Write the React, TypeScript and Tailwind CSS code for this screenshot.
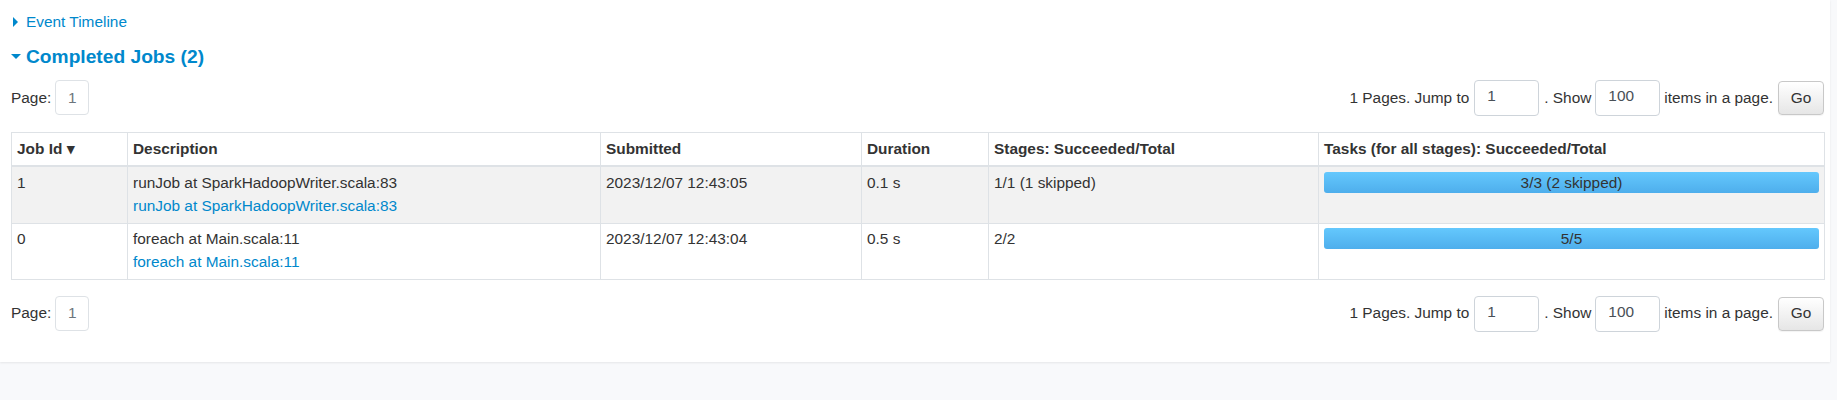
import React from 'react';

const jobs = [
  {
    id: '1',
    name: 'runJob at SparkHadoopWriter.scala:83',
    submitted: '2023/12/07 12:43:05',
    duration: '0.1 s',
    stages: '1/1 (1 skipped)',
    tasks: '3/3 (2 skipped)',
  },
  {
    id: '0',
    name: 'foreach at Main.scala:11',
    submitted: '2023/12/07 12:43:04',
    duration: '0.5 s',
    stages: '2/2',
    tasks: '5/5',
  },
];

const columns = [
  { label: 'Job Id \u25BE', width: 'w-[116px]' },
  { label: 'Description', width: 'w-[473px]' },
  { label: 'Submitted', width: 'w-[261px]' },
  { label: 'Duration', width: 'w-[127px]' },
  { label: 'Stages: Succeeded/Total', width: 'w-[330px]' },
  { label: 'Tasks (for all stages): Succeeded/Total', width: 'w-[506px]' },
];

function Pagination() {
  return (
    <div className="flex items-center justify-between">
      <div className="flex items-center">
        <span>Page:</span>
        <span className="ml-[4px] flex h-[35px] w-[34px] items-center justify-center rounded-[4px] border border-[#dee2e6] text-[#6c757d]">
          1
        </span>
      </div>
      <div className="flex items-center">
        <span>1 Pages. Jump to</span>
        <input
          readOnly
          defaultValue="1"
          className="ml-[5px] h-[36px] w-[65px] rounded-[4px] border border-[#ced4da] px-3 pb-[3px] text-[#495057] outline-none"
        />
        <span className="ml-[5px]">. Show</span>
        <input
          readOnly
          defaultValue="100"
          className="ml-[4px] h-[36px] w-[65px] rounded-[4px] border border-[#ced4da] px-3 pb-[3px] text-[#495057] outline-none"
        />
        <span className="ml-[4px]">items in a page.</span>
        <button className="ml-[5px] h-[34px] w-[46px] rounded-[4px] border border-[#c8c8c8] bg-gradient-to-b from-white to-[#e6e6e6] text-[#333] shadow-[0_1px_1px_rgba(0,0,0,0.05)]">
          Go
        </button>
      </div>
    </div>
  );
}

export default function App() {
  return (
    <div className="min-h-[400px] bg-[#f8f9fb] font-['Liberation_Sans',Arial,sans-serif] text-[15.4px] leading-[22.8px] text-[#333]">
      <div className="w-[1830px] bg-white pb-[30px] pl-[11px] pr-[6px] pt-[10.5px] shadow-[0_1px_2px_rgba(0,0,0,0.08)]">
        <div className="flex items-center text-[#0088cc]">
          <span className="ml-[2px] mr-[8px] inline-block h-0 w-0 border-y-[5px] border-l-[5px] border-y-transparent border-l-[#0088cc]" />
          <span>Event Timeline</span>
        </div>

        <h4 className="mt-[12px] flex items-center text-[19.2px] font-bold leading-[23px] text-[#0088cc]">
          <span className="mr-[5px] inline-block h-0 w-0 border-x-[5px] border-t-[5px] border-x-transparent border-t-[#0088cc]" />
          <span>Completed Jobs (2)</span>
        </h4>

        <div className="mt-[11.7px]">
          <Pagination />
        </div>

        <table className="mt-[16px] w-[1813px] table-fixed border-collapse border border-[#dee2e6]">
          <thead>
            <tr>
              {columns.map((col) => (
                <th
                  key={col.label}
                  className={`${col.width} border border-b-2 border-[#dee2e6] px-[5px] py-[4.8px] text-left font-bold`}
                >
                  {col.label}
                </th>
              ))}
            </tr>
          </thead>
          <tbody>
            {jobs.map((job, index) => (
              <tr key={job.id} className={index % 2 === 0 ? 'bg-[#f2f2f2]' : 'bg-white'}>
                <td className="border border-[#dee2e6] px-[5px] py-[4.8px] align-top">{job.id}</td>
                <td className="border border-[#dee2e6] px-[5px] py-[4.8px] align-top">
                  <div>{job.name}</div>
                  <div className="text-[#0088cc]">{job.name}</div>
                </td>
                <td className="border border-[#dee2e6] px-[5px] py-[4.8px] align-top">{job.submitted}</td>
                <td className="border border-[#dee2e6] px-[5px] py-[4.8px] align-top">{job.duration}</td>
                <td className="border border-[#dee2e6] px-[5px] py-[4.8px] align-top">{job.stages}</td>
                <td className="border border-[#dee2e6] px-[5px] py-[4.8px] align-top">
                  <div className="h-[21px] rounded-[3px] bg-gradient-to-b from-[#64c8fd] to-[#4eaeec] text-center leading-[21px] text-[#333]">
                    {job.tasks}
                  </div>
                </td>
              </tr>
            ))}
          </tbody>
        </table>

        <div className="mt-[16px]">
          <Pagination />
        </div>
      </div>
    </div>
  );
}
